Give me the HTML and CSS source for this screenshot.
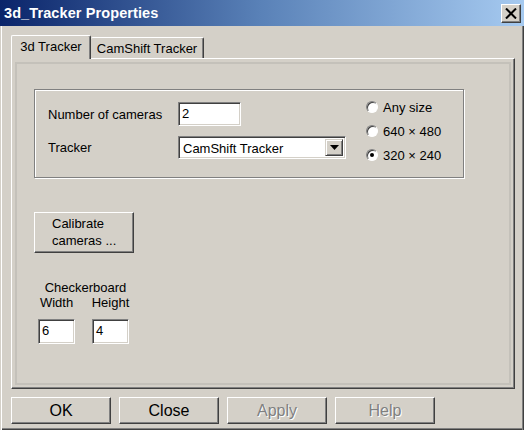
FILE: index.html
```html
<!DOCTYPE html>
<html>
<head>
<meta charset="utf-8">
<link rel="stylesheet" href="styles.css">
</head>
<body>
<div class="window">
  <div class="titlebar">
    <span class="title">3d_Tracker Properties</span>
    <span class="close-btn"><svg width="12" height="11" viewBox="0 0 12 11"><path d="M1 0.5 L11 10.5 M11 0.5 L1 10.5" stroke="#000" stroke-width="2" fill="none"/></svg></span>
  </div>
  <div class="tabs">
    <div class="tab active">3d Tracker</div>
    <div class="tab">CamShift Tracker</div>
  </div>
  <div class="panel">
    <div class="group">
      <div class="fields">
        <span class="label">Number of cameras</span>
        <span class="textbox cams">2</span>
        <span class="label">Tracker</span>
        <span class="select"><span class="select-text">CamShift Tracker</span><span class="drop"><svg width="9" height="5" viewBox="0 0 9 5"><path d="M0 0 H9 L4.5 5 Z" fill="#000"/></svg></span></span>
      </div>
      <div class="radios">
        <div class="radio-row"><span class="radio"></span>Any size</div>
        <div class="radio-row"><span class="radio"></span>640 × 480</div>
        <div class="radio-row"><span class="radio checked"></span>320 × 240</div>
      </div>
    </div>
    <div class="btn calibrate">Calibrate<br>cameras ...</div>
    <div class="checker">
      <span class="checker-title">Checkerboard</span>
      <span class="clabel">Width</span>
      <span class="clabel">Height</span>
      <span class="textbox small">6</span>
      <span class="textbox small">4</span>
    </div>
  </div>
  <div class="buttons">
    <div class="btn big">OK</div>
    <div class="btn big">Close</div>
    <div class="btn big disabled">Apply</div>
    <div class="btn big disabled">Help</div>
  </div>
</div>
</body>
</html>
```
FILE: styles.css
```css
html, body {
  margin: 0;
  padding: 0;
}
body {
  width: 524px;
  height: 430px;
  background: #d4d0c8;
  font-family: "Liberation Sans", Arial, sans-serif;
  font-size: 13px;
  color: #000;
  overflow: hidden;
}
.window {
  height: 430px;
  box-sizing: border-box;
  box-shadow: inset 1px 0 #d4d0c8, inset 2px 0 #fff, inset -1px 0 #404040, inset -2px 0 #808080, inset 0 -1px #404040, inset 0 -2px #808080;
}
.titlebar {
  height: 26px;
  display: flex;
  align-items: center;
  padding-left: 4px;
  background: linear-gradient(to right, #0a246a 0%, #5a82b8 50%, #a6caf0 100%);
}
.title {
  color: #fff;
  font-weight: bold;
  font-size: 14.5px;
  letter-spacing: 0.1px;
}
.close-btn {
  margin-left: auto;
  margin-right: 3px;
  width: 20px;
  height: 19px;
  box-sizing: border-box;
  background: #d4d0c8;
  border: 1px solid;
  border-color: #fff #404040 #404040 #fff;
  box-shadow: inset -1px -1px #808080;
  display: flex;
  align-items: center;
  justify-content: center;
}
.tabs {
  display: flex;
  align-items: flex-end;
  padding-top: 9px;
  margin-left: 11px;
  height: 23px;
}
.tab {
  box-sizing: border-box;
  height: 21px;
  padding: 0 5px 0 5px;
  display: flex;
  align-items: center;
  justify-content: center;
  border-top: 1px solid #fff;
  border-right: 1px solid #404040;
  box-shadow: inset -1px 0 #808080;
  border-top-left-radius: 2px;
  border-top-right-radius: 2px;
  width: 113px;
}
.tab.active {
  width: 80px;
  height: 24px;
  margin-bottom: -1px;
  border-left: 1px solid #fff;
  background: #d4d0c8;
  position: relative;
  z-index: 1;
  padding-bottom: 2px;
}
.panel {
  margin-left: 11px;
  width: 504px;
  height: 331px;
  box-sizing: border-box;
  border: 1px solid;
  border-color: #fff #404040 #404040 #fff;
  box-shadow: inset -1px -1px #808080, inset 0 0 0 3px #d4d0c8, inset 0 0 0 5px #c4c1ba;
  padding-top: 30px;
  padding-left: 22px;
}
.group {
  width: 430px;
  height: 89px;
  box-sizing: border-box;
  border: 1px solid #808080;
  box-shadow: 1px 1px 0 #fff, inset 1px 1px 0 #fff;
  display: flex;
  padding-left: 13px;
}
.fields {
  display: grid;
  grid-template-columns: 130px auto;
  row-gap: 10px;
  align-items: center;
  margin-top: 12px;
  align-self: flex-start;
}
.label {
  line-height: 15px;
}
.textbox {
  box-sizing: border-box;
  background: #fff;
  border: 1px solid;
  border-color: #808080 #fff #fff #808080;
  box-shadow: inset 1px 1px #404040, inset -1px -1px #d4d0c8;
  padding: 3px 0 0 3px;
  line-height: 16px;
  display: block;
}
.cams {
  width: 63px;
  height: 24px;
}
.select {
  box-sizing: border-box;
  width: 168px;
  height: 23px;
  background: #fff;
  border: 1px solid;
  border-color: #808080 #fff #fff #808080;
  box-shadow: inset 1px 1px #404040, inset -1px -1px #d4d0c8;
  display: flex;
  align-items: stretch;
  padding: 2px 2px 2px 2px;
}
.select-text {
  flex: 1;
  padding-left: 2px;
  line-height: 19px;
}
.drop {
  width: 18px;
  box-sizing: border-box;
  background: #d4d0c8;
  border: 1px solid;
  border-color: #d4d0c8 #404040 #404040 #d4d0c8;
  box-shadow: inset 1px 1px #fff, inset -1px -1px #808080;
  display: flex;
  align-items: center;
  justify-content: center;
}
.radios {
  margin-left: 20px;
  margin-top: 5px;
  display: flex;
  flex-direction: column;
}
.radio-row {
  height: 24px;
  display: flex;
  align-items: center;
}
.radio {
  width: 12px;
  height: 12px;
  box-sizing: border-box;
  border-radius: 50%;
  background: #fff;
  border: 1px solid;
  border-color: #808080 #fff #fff #808080;
  box-shadow: inset 1px 1px #404040;
  margin-right: 5px;
  display: flex;
  align-items: center;
  justify-content: center;
}
.radio.checked::after {
  content: "";
  width: 4px;
  height: 4px;
  border-radius: 50%;
  background: #000;
}
.btn {
  box-sizing: border-box;
  border: 1px solid;
  border-color: #fff #404040 #404040 #fff;
  box-shadow: inset -1px -1px #808080;
  background: #d4d0c8;
}
.calibrate {
  margin-top: 34px;
  width: 100px;
  height: 41px;
  padding: 2px 0 0 17px;
  line-height: 17px;
}
.checker {
  display: grid;
  grid-template-columns: 37px 37px;
  column-gap: 17px;
  margin-left: 4px;
  margin-top: 27px;
  justify-items: center;
  width: 91px;
}
.checker-title {
  grid-column: 1 / 3;
  line-height: 15px;
  white-space: nowrap;
  justify-self: center;
  margin-left: 4px;
}
.clabel {
  line-height: 16px;
  white-space: nowrap;
}
.textbox.small {
  width: 37px;
  height: 25px;
  margin-top: 8px;
  justify-self: stretch;
}
.buttons {
  display: flex;
  gap: 8px;
  margin-left: 11px;
  margin-top: 8px;
}
.btn.big {
  width: 100px;
  height: 27px;
  font-size: 16px;
  display: flex;
  align-items: center;
  justify-content: center;
}
.btn.disabled {
  color: #808080;
  text-shadow: 1px 1px 0 #fff;
}
```
